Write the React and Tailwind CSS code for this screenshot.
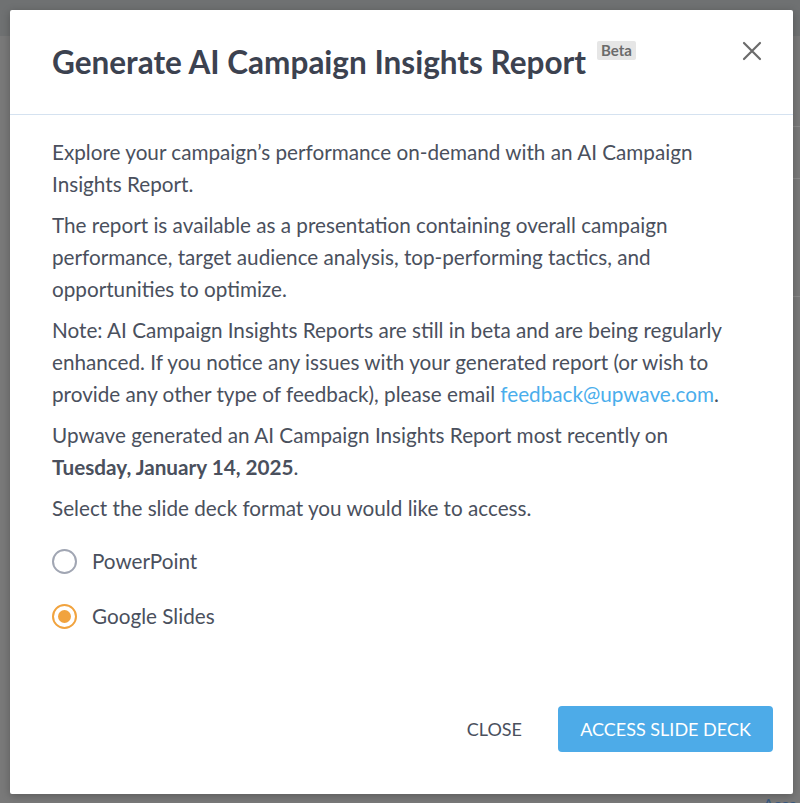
import { useState } from "react";

const FORMATS = [
	{ id: "pptx", label: "PowerPoint" },
	{ id: "slides", label: "Google Slides" },
];

const Radio = ({ checked, label, onChange }) => (
	<label className="flex cursor-pointer items-center gap-[15px]" onClick={onChange}>
		<span
			className={
				checked
					? "flex h-[25px] w-[25px] items-center justify-center rounded-full border-2 border-[#f1a33e]"
					: "flex h-[25px] w-[25px] items-center justify-center rounded-full border-2 border-[#a1a6b3]"
			}
		>
			{checked && <span className="h-[13px] w-[13px] rounded-full bg-[#f1a33e]" />}
		</span>
		<span className="text-[20.7px] text-[#4a505d]">{label}</span>
	</label>
);

export default function App() {
	const [format, setFormat] = useState("slides");

	return (
		<div
			className="relative h-[803px] w-[800px] overflow-hidden bg-[#797979]"
			style={{ fontFamily: "Lato, 'Open Sans', sans-serif" }}
		>
			{/* page behind the overlay */}
			<div className="absolute inset-x-0 top-0 h-[36px] bg-[#6f7172]" />
			<div className="absolute right-0 top-[126px] h-px w-[7px] bg-[#8a8a8a]" />
			<div className="absolute right-0 top-[178px] h-px w-[7px] bg-[#8a8a8a]" />
			<div className="absolute right-0 top-[296px] h-px w-[7px] bg-[#8a8a8a]" />
			<div className="absolute left-[763px] top-[796px] text-[16px] leading-none text-[#3a5a80]">Acce</div>

			<div className="absolute left-[10px] top-[10px] flex h-[784px] w-[783px] flex-col rounded-[2px] bg-white shadow-[0_2px_8px_rgba(0,0,0,0.25)]">
				<div className="flex h-[105px] shrink-0 items-start justify-between border-b border-[#d5e2f0] pl-[42px] pr-[30px]">
					<div className="flex items-start pt-[32px]">
						<h1 className="text-[31.5px] font-bold leading-[40px] text-[#3c4250]">
							Generate AI Campaign Insights Report
						</h1>
						<span className="ml-[11px] mt-[-1px] rounded-[2px] bg-[#e6e6e6] px-[4px] text-[15px] font-bold leading-[19px] text-[#6b6b6b]">
							Beta
						</span>
					</div>
					<button className="mt-[30px] flex h-[22px] w-[22px] items-center justify-center text-[#6b6b6b]">
						<svg width="20" height="20" viewBox="0 0 20 20" fill="none" stroke="currentColor" strokeWidth="2.2" strokeLinecap="round">
							<path d="M2 2L18 18M18 2L2 18" />
						</svg>
					</button>
				</div>

				<div className="flex flex-1 flex-col gap-[9px] pl-[42px] pr-[60px] pt-[21px] text-[20.7px] leading-[32px] text-[#4a505d]">
					<p>Explore your campaign’s performance on-demand with an AI Campaign Insights Report.</p>
					<p>
						The report is available as a presentation containing overall campaign performance, target audience
						analysis, top-performing tactics, and opportunities to optimize.
					</p>
					<p>
						Note: AI Campaign Insights Reports are still in beta and are being regularly enhanced. If you notice any
						issues with your generated report (or wish to provide any other type of feedback), please email{" "}
						<a className="text-[#4aaeec]">feedback@upwave.com</a>.
					</p>
					<p>
						Upwave generated an AI Campaign Insights Report most recently on{" "}
						<span className="font-bold">Tuesday, January 14, 2025</span>.
					</p>
					<p>Select the slide deck format you would like to access.</p>

					<div className="mt-[12px] flex flex-col gap-[23px]">
						{FORMATS.map((f) => (
							<Radio key={f.id} label={f.label} checked={format === f.id} onChange={() => setFormat(f.id)} />
						))}
					</div>
				</div>

				<div className="flex shrink-0 items-center justify-end gap-[36px] pb-[42px] pr-[20px]">
					<button className="text-[18px] uppercase text-[#4a505d]">Close</button>
					<button className="h-[46px] w-[215px] rounded-[4px] bg-[#4dabe8] text-[18px] uppercase text-white">
						Access Slide Deck
					</button>
				</div>
			</div>
		</div>
	);
}
